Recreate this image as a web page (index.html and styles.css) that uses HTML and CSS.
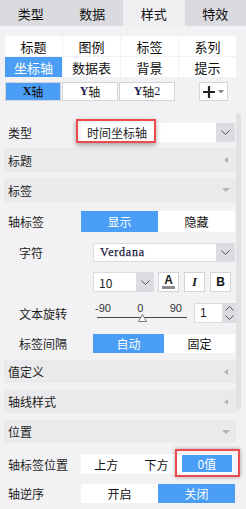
FILE: index.html
```html
<!DOCTYPE html>
<html lang="zh">
<head>
<meta charset="utf-8">
<link rel="stylesheet" href="styles.css">
</head>
<body>
<div class="tabs">
  <div class="tab">类型</div>
  <div class="tab">数据</div>
  <div class="tab active">样式</div>
  <div class="tab">特效</div>
</div>
<div class="content">
  <div class="subtabs">
    <div class="cell">标题</div>
    <div class="cell">图例</div>
    <div class="cell">标签</div>
    <div class="cell">系列</div>
    <div class="cell on">坐标轴</div>
    <div class="cell">数据表</div>
    <div class="cell">背景</div>
    <div class="cell">提示</div>
  </div>
  <div class="axisbar">
    <div class="axbtn on"><b>X</b>轴</div>
    <div class="axbtn"><b>Y</b>轴</div>
    <div class="axbtn"><b>Y</b>轴<span class="two">2</span></div>
    <div class="addbtn">
      <svg width="14" height="14" viewBox="0 0 14 14"><path d="M7 1v12M1 7h12" stroke="#222" stroke-width="2.2"/></svg>
      <svg width="6" height="4" viewBox="0 0 6 4"><path d="M0 0h6L3 3.5z" fill="#888"/></svg>
    </div>
  </div>

  <div class="row r-type">
    <div class="label">类型</div>
    <div class="select">
      <div class="val">时间坐标轴</div>
      <div class="arrow"><svg width="9" height="5" viewBox="0 0 9 5"><path d="M0.5 0.5l4 4 4-4" fill="none" stroke="#555" stroke-width="1"/></svg></div>
      <div class="hl hl-type"></div>
    </div>
  </div>

  <div class="hdr h1"><span>标题</span><i class="tri-l"></i></div>
  <div class="hdr h1"><span>标签</span><i class="tri-d"></i></div>

  <div class="row r-axlabel">
    <div class="label">轴标签</div>
    <div class="seg">
      <span class="on">显示</span>
      <span>隐藏</span>
    </div>
  </div>

  <div class="row r-font">
    <div class="label sub">字符</div>
    <div class="select">
      <div class="val serif">Verdana</div>
      <div class="arrow"><svg width="9" height="5" viewBox="0 0 9 5"><path d="M0.5 0.5l4 4 4-4" fill="none" stroke="#555" stroke-width="1"/></svg></div>
    </div>
  </div>

  <div class="row r-size">
    <div class="label sub"></div>
    <div class="select size">
      <div class="val num">10</div>
      <div class="arrow"><svg width="9" height="5" viewBox="0 0 9 5"><path d="M0.5 0.5l4 4 4-4" fill="none" stroke="#555" stroke-width="1"/></svg></div>
    </div>
    <div class="fbtn first"><span class="a">A</span></div>
    <div class="fbtn"><span class="it">I</span></div>
    <div class="fbtn"><span class="b">B</span></div>
  </div>

  <div class="row r-rot">
    <div class="label sub">文本旋转</div>
    <div class="slider">
      <div class="ticks"><span>-90</span><span>0</span><span>90</span></div>
      <div class="track">
        <svg class="thumb" width="9" height="8" viewBox="0 0 9 8"><path d="M4.5 0.5L8.5 7.5H0.5z" fill="#fff" stroke="#777" stroke-width="1"/></svg>
      </div>
    </div>
    <div class="numin">
      <div class="nv">1</div>
      <div class="spin">
        <svg width="9" height="5" viewBox="0 0 9 5"><path d="M0.5 4.5l4-4 4 4" fill="none" stroke="#555" stroke-width="1"/></svg>
        <svg width="9" height="5" viewBox="0 0 9 5"><path d="M0.5 0.5l4 4 4-4" fill="none" stroke="#555" stroke-width="1"/></svg>
      </div>
    </div>
  </div>

  <div class="row r-gap">
    <div class="label sub">标签间隔</div>
    <div class="seg">
      <span class="on">自动</span>
      <span>固定</span>
    </div>
  </div>

  <div class="hdr h2"><span>值定义</span><i class="tri-l"></i></div>
  <div class="hdr h2"><span>轴线样式</span><i class="tri-l"></i></div>
  <div class="hdr h2"><span>位置</span><i class="tri-d"></i></div>

  <div class="row r-pos">
    <div class="label">轴标签位置</div>
    <div class="seg three">
      <span>上方</span>
      <span>下方</span>
      <span class="zero"><b class="zb">0值</b><i class="hl hl-zero"></i></span>
    </div>
  </div>

  <div class="row r-rev">
    <div class="label">轴逆序</div>
    <div class="seg">
      <span>开启</span>
      <span class="on">关闭</span>
    </div>
  </div>
</div>
<div class="scrollbar"></div>
</body>
</html>
```

FILE: styles.css
```css
* { box-sizing: border-box; margin: 0; padding: 0; }

body {
  width: 246px;
  height: 509px;
  overflow: hidden;
  position: relative;
  background: #f2f2f4;
  font-family: "Noto Sans CJK SC", "Microsoft YaHei", sans-serif;
  font-size: 12px;
  color: #1e1e1e;
}

.tabs {
  display: flex;
  height: 26px;
  background: #dadadf;
}
.tab {
  flex: 1;
  display: flex;
  align-items: center;
  justify-content: center;
  font-size: 13px;
  color: #111;
}
.tab.active { background: #efeff2; }

.content {
  padding: 10px 10px 0 4px;
}

.subtabs {
  margin-left: 1px;
  display: grid;
  grid-template-columns: repeat(4, 1fr);
  grid-auto-rows: 20px;
  gap: 1px;
}
.cell {
  background: #fff;
  display: flex;
  align-items: center;
  justify-content: center;
  font-size: 13px;
  color: #111;
}
.cell.on { background: #4a9ef5; color: #fff; }

.axisbar {
  margin: 5px 0 0 1px;
  height: 19px;
  display: flex;
  gap: 1px;
}
.axbtn {
  width: 56px;
  background: #fff;
  border: 1px solid #d4d4d8;
  display: flex;
  align-items: center;
  justify-content: center;
  font-size: 12px;
  color: #222;
}
.axbtn b {
  font-family: "Liberation Serif", serif;
  font-weight: bold;
  font-size: 12px;
  color: #1a1a55;
}
.axbtn .two {
  font-family: "Liberation Serif", serif;
  font-size: 12px;
  color: #1a1a55;
}
.axbtn.on {
  background: #4a9ef5;
  border-color: #d4d4d8;
  color: #111;
}
.axbtn.on b { color: #111; }
.addbtn {
  margin-left: 23px;
  width: 29px;
  background: #fff;
  border: 1px solid #d4d4d8;
  display: flex;
  align-items: center;
  justify-content: center;
  gap: 2px;
  padding-right: 1px;
}

.row {
  display: flex;
  align-items: stretch;
}
.label {
  width: 77px;
  padding-left: 4px;
  display: flex;
  align-items: center;
  flex: none;
}
.label.sub {
  width: 89px;
  padding-left: 15px;
}

.r-type { margin-top: 22px; height: 19px; }
.r-axlabel { margin-top: 9px; height: 21px; }
.r-font { margin-top: 11px; height: 19px; }
.r-size { margin-top: 10px; height: 20px; }
.r-rot { margin-top: 11px; height: 20px; }
.r-gap { margin-top: 11px; height: 19px; }
.r-pos { margin-top: 11px; height: 20px; }
.r-rev { margin-top: 10px; height: 19px; }

.select {
  position: relative;
  width: 154px;
  display: flex;
  background: #fff;
}
.r-font .select { width: 142px; border: 1px solid #dcdce0; border-right: none; }
.select .val {
  flex: 1;
  display: flex;
  align-items: center;
  padding-left: 6px;
}
.select .val.serif {
  font-family: "Liberation Serif", serif;
  font-size: 12px;
  letter-spacing: 0.8px;
  color: #1a1a40;
  -webkit-text-stroke: 0.25px #1a1a40;
}
.select .arrow {
  width: 19px;
  background: #dcdce0;
  display: flex;
  align-items: center;
  justify-content: center;
}
.select.size {
  width: 61px;
  border: 1px solid #dcdce0;
  border-right: none;
}
.select.size .arrow { width: 18px; }
.select .val.num { font-size: 12px; padding-left: 5px; }

.hl {
  position: absolute;
  border: 2px solid #ec4a4f;
  box-shadow: 0 2px 5px rgba(0, 0, 0, 0.35);
  pointer-events: none;
}
.hl-type {
  left: -5px;
  top: -4px;
  width: 80px;
  height: 24px;
}

.hdr {
  height: 24px;
  background: #eaeaec;
  display: flex;
  align-items: center;
  justify-content: space-between;
  padding: 0 7px 0 4px;
  font-size: 12px;
  color: #222;
}
.hdr.h1 { margin-top: 6px; }
.hdr.h2 { margin-top: 7px; height: 23px; }

.tri-l {
  width: 0;
  height: 0;
  border-top: 3.5px solid transparent;
  border-bottom: 3.5px solid transparent;
  border-right: 4px solid #b4b4b8;
  margin-right: 1px;
}
.tri-d {
  width: 0;
  height: 0;
  border-left: 4px solid transparent;
  border-right: 4px solid transparent;
  border-top: 4px solid #b4b4b8;
  margin-right: -1px;
}

.seg {
  width: 154px;
  display: flex;
  background: #fff;
}
.r-gap .seg { width: 142px; }
.seg > span {
  flex: 1;
  display: flex;
  align-items: center;
  justify-content: center;
  color: #111;
}
.seg > span.on { background: #4a9ef5; color: #fff; }

.seg.three > span.zero {
  position: relative;
  align-items: stretch;
  padding: 1px 3px 2px 0;
}
.zb {
  flex: 1;
  font-weight: normal;
  background: #4a9ef5;
  color: #fff;
  display: flex;
  align-items: center;
  justify-content: center;
}
.hl-zero {
  left: -7px;
  top: -5px;
  right: -5px;
  bottom: -3px;
  box-shadow: 0 0 4px rgba(0, 0, 0, 0.35);
}

.fbtn {
  width: 21px;
  margin-left: 5px;
  background: #fff;
  border: 1px solid #d4d4d8;
  display: flex;
  align-items: center;
  justify-content: center;
}
.fbtn.first { margin-left: 4px; }
.fbtn .a {
  font-family: "Liberation Sans", sans-serif;
  font-weight: bold;
  font-size: 12px;
  line-height: 11px;
  color: #222;
  padding: 0 2px;
  border-bottom: 3px solid #8c8c8c;
}
.fbtn .it {
  font-family: "Liberation Serif", serif;
  font-style: italic;
  font-weight: bold;
  font-size: 13px;
  color: #222;
}
.fbtn .b {
  font-family: "Liberation Sans", sans-serif;
  font-weight: bold;
  font-size: 12px;
  color: #111;
}

.slider {
  width: 92px;
  margin-left: 2px;
  display: flex;
  flex-direction: column;
  justify-content: flex-start;
}
.ticks {
  display: flex;
  justify-content: space-between;
  padding: 0 5px 0 0;
  font-family: "Liberation Sans", sans-serif;
  font-size: 11px;
  line-height: 10px;
  color: #333;
}
.track {
  position: relative;
  margin: 4px 0 0 2px;
  height: 1px;
  background: #444;
}
.thumb {
  position: absolute;
  left: 41px;
  top: -3px;
}

.numin {
  margin-left: 7px;
  width: 42px;
  display: flex;
}
.nv {
  width: 29px;
  background: #fff;
  border: 1px solid #dcdce0;
  display: flex;
  align-items: center;
  padding-left: 5px;
  font-family: "Liberation Sans", sans-serif;
  font-size: 12px;
}
.spin {
  width: 13px;
  background: #dcdce0;
  display: flex;
  flex-direction: column;
  align-items: center;
  justify-content: center;
  gap: 4px;
}

.scrollbar {
  position: absolute;
  left: 236px;
  top: 113px;
  width: 5px;
  height: 297px;
  background: #e2e2e5;
  border-radius: 3px;
}
```
